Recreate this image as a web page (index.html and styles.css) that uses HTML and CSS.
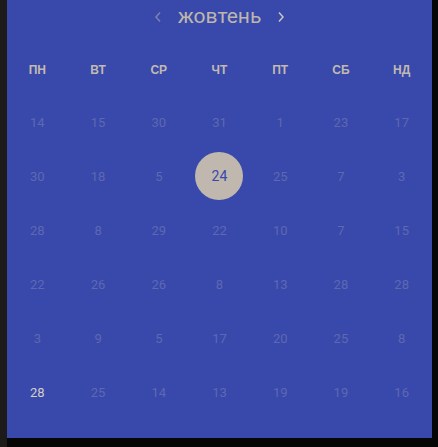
FILE: index.html
```html
<!DOCTYPE html>
<html lang="uk">
<head>
<meta charset="utf-8">
<link rel="stylesheet" href="styles.css">
</head>
<body>
<div class="frame">
  <div class="calendar">
    <div class="header">
      <button class="nav prev" aria-label="prev">
        <svg width="8" height="12" viewBox="0 0 8 12"><path d="M6 1.5 L2 6 L6 10.5" fill="none" stroke="currentColor" stroke-width="1.5"/></svg>
      </button>
      <span class="month">жовтень</span>
      <button class="nav next" aria-label="next">
        <svg width="8" height="12" viewBox="0 0 8 12"><path d="M2 1.5 L6 6 L2 10.5" fill="none" stroke="currentColor" stroke-width="1.5"/></svg>
      </button>
    </div>
    <div class="weekdays">
      <span>ПН</span><span>ВТ</span><span>СР</span><span>ЧТ</span><span>ПТ</span><span>СБ</span><span>НД</span>
    </div>
    <div class="days">
      <span>14</span><span>15</span><span>30</span><span>31</span><span>1</span><span>23</span><span>17</span>
      <span>30</span><span>18</span><span>5</span><span class="selected"><i>24</i></span><span>25</span><span>7</span><span>3</span>
      <span>28</span><span>8</span><span>29</span><span>22</span><span>10</span><span>7</span><span>15</span>
      <span>22</span><span>26</span><span>26</span><span>8</span><span>13</span><span>28</span><span>28</span>
      <span>3</span><span>9</span><span>5</span><span>17</span><span>20</span><span>25</span><span>8</span>
      <span class="active">28</span><span>25</span><span>14</span><span>13</span><span>19</span><span>19</span><span>16</span>
    </div>
  </div>
</div>
</body>
</html>
```
FILE: styles.css
```css
html, body {
  margin: 0;
  padding: 0;
}
body {
  width: 438px;
  height: 447px;
  overflow: hidden;
  background: linear-gradient(to right, #1c1b19 0, #1c1b19 7px, #060606 7px);
  font-family: Roboto, "Liberation Sans", sans-serif;
}
.frame {
  padding-left: 7px;
}
.calendar {
  width: 425px;
  height: 438px;
  background: #3949ab;
  display: flex;
  flex-direction: column;
}
.header {
  height: 33px;
  display: flex;
  align-items: center;
  justify-content: center;
  gap: 14px;
}
.month {
  font-size: 21px;
  color: #bdb6ad;
  line-height: 1;
}
.nav {
  border: 0;
  background: none;
  padding: 0;
  width: 12px;
  height: 14px;
  display: flex;
  align-items: center;
  justify-content: center;
}
.nav.prev { color: #7d82ae; }
.nav.next { color: #cbc4bc; }
.weekdays {
  margin-top: 25px;
  height: 24px;
  display: grid;
  grid-template-columns: repeat(7, 1fr);
  align-items: center;
  justify-items: center;
  font-family: "Liberation Sans", Arial, sans-serif;
  font-weight: bold;
  font-size: 12px;
  color: #c2bab1;
}
.days {
  margin-top: 13px;
  display: grid;
  grid-template-columns: repeat(7, 1fr);
  grid-auto-rows: 54px;
  align-items: center;
  justify-items: center;
  font-size: 13px;
  color: #5d68b2;
}
.days span {
  display: flex;
  align-items: center;
  justify-content: center;
}
.days .selected i {
  font-style: normal;
  width: 48px;
  height: 48px;
  border-radius: 50%;
  background: #c0b8ae;
  color: #3949ab;
  font-size: 14px;
  display: flex;
  align-items: center;
  justify-content: center;
}
.days .active {
  color: #d6cec6;
}
```
